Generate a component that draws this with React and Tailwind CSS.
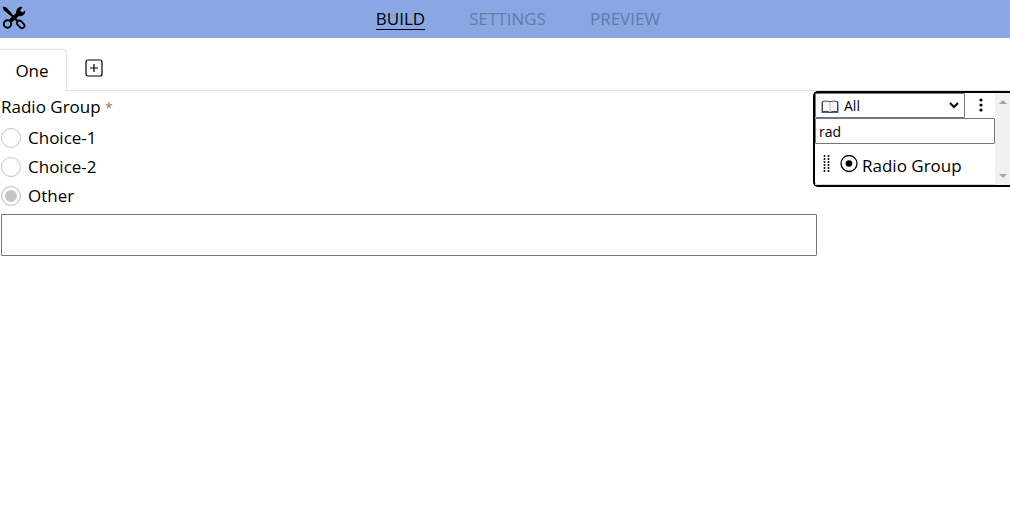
import React, { useState } from "react";

function ToolsIcon() {
  return (
    <svg width="24" height="24" viewBox="0 0 24 24" fill="none" stroke="#000" aria-hidden="true">
      <path d="M1.500 1.500L3.800 2L9 7.500L8 8.500L2.500 4Z" fill="#000" strokeWidth="1.400" strokeLinejoin="round" />
      <path d="M7.500 7L16.500 16" strokeWidth="2.200" />
      <rect x="14.500" y="15.800" width="8.500" height="5" rx="2.500" transform="rotate(45 18.700 18.300)" strokeWidth="1.800" />
      <path d="M8.500 15L16.500 7.500" strokeWidth="4" />
      <path d="M20.500 1a5 5 0 0 0-6 6.500L17 10a5 5 0 0 0 6.200-5.700L20.500 6.500L18 4.500Z" fill="#000" stroke="none" />
      <circle cx="5.500" cy="18" r="3.700" strokeWidth="1.900" />
    </svg>
  );
}

function BookIcon() {
  return (
    <svg width="18" height="14" viewBox="0 0 18 14" fill="none" aria-hidden="true">
      <path d="M0.500 2V13H17.500V2Z" fill="#2b6cab" />
      <path d="M1.500 1.500Q6 0.500 9 1.700Q12 0.500 16.500 1.500V11.700Q12 10.800 9 12.300Q6 10.800 1.500 11.700Z" fill="#f7f7f4" stroke="#333" strokeWidth="0.900" />
      <path d="M9 2V12" stroke="#aaa" strokeWidth="0.800" />
    </svg>
  );
}

function Choice({ label, checked, onChange }) {
  return (
    <label className="flex h-[29px] items-center gap-[7px]">
      <input
        type="radio"
        name="choice"
        checked={checked}
        onChange={onChange}
        className="size-5 shrink-0 appearance-none rounded-full border border-[#c0c5c5] bg-white checked:bg-[#c3c7c7] checked:shadow-[inset_0_0_0_3px_#fff]"
      />
      {label}
    </label>
  );
}

function Palette() {
  const [query, setQuery] = useState("rad");
  return (
    <aside className="absolute right-0 top-0 flex w-[197px] rounded-l-[5px] border-2 border-r-0 border-black bg-white">
      <div className="min-w-0 flex-1">
        <div className="flex h-[25px] items-center">
          <div className="relative h-[25px] w-[150px]">
            <select aria-label="Component category" className="block h-[25px] w-full appearance-none rounded-[1px] border border-[#767676] bg-white py-0 pl-7 text-sm leading-5">
              <option>All</option>
            </select>
            <span className="pointer-events-none absolute left-[6px] top-[7px]"><BookIcon /></span>
            <svg className="pointer-events-none absolute right-[6px] top-[9px]" width="10" height="7" viewBox="0 0 10 7" fill="none" aria-hidden="true">
              <path d="M1 1L5 5L9 1" stroke="#000" strokeWidth="2" />
            </svg>
          </div>
          <button type="button" aria-label="More options" className="flex flex-1 justify-center pb-[2px] pl-[2px]">
            <svg width="4" height="14" viewBox="0 0 4 14" aria-hidden="true">
              <circle cx="2" cy="2" r="1.600" />
              <circle cx="2" cy="7" r="1.600" />
              <circle cx="2" cy="12" r="1.600" />
            </svg>
          </button>
        </div>
        <input
          aria-label="Search components"
          value={query}
          onChange={(e) => setQuery(e.target.value)}
          className="block h-[26px] w-full rounded-[1px] border border-[#767676] px-[3px] text-sm outline-none"
        />
        <button type="button" className="flex h-[41px] w-full items-center border-b border-[#d8dcdc] pl-2">
          <svg width="7" height="18" viewBox="0 0 7 18" aria-hidden="true">
            {[1, 4, 7, 10, 13, 16].map((y) => (
              <g key={y}>
                <circle cx="1.500" cy={y} r="1" />
                <circle cx="5.500" cy={y} r="1" />
              </g>
            ))}
          </svg>
          <svg className="ml-[10px]" width="18" height="18" viewBox="0 0 18 18" fill="none" aria-hidden="true">
            <circle cx="9" cy="8.500" r="8" stroke="#000" strokeWidth="1.300" />
            <circle cx="9" cy="8.500" r="3.300" fill="#000" />
          </svg>
          <span className="ml-1 whitespace-nowrap pt-1">Radio Group</span>
        </button>
      </div>
      <div className="flex w-[15px] flex-col items-center justify-between bg-[#f1f1f1] py-[7px]" aria-hidden="true">
        <svg width="8" height="4" viewBox="0 0 8 4"><path d="M0 4L4 0L8 4Z" fill="#a5a5a5" /></svg>
        <svg width="8" height="4" viewBox="0 0 8 4"><path d="M0 0L4 4L8 0Z" fill="#a5a5a5" /></svg>
      </div>
    </aside>
  );
}

export default function App() {
  const [choice, setChoice] = useState("Other");
  return (
    <div className="font-['Open_Sans','Noto_Sans',sans-serif] text-[17px] text-black">
      <header className="flex h-[38px] items-center bg-[#89a8e3]">
        <div className="flex flex-1 pb-[2px] pl-[2px]"><ToolsIcon /></div>
        <nav className="flex gap-11 pl-6">
          <a href="#build" className="border-b border-black leading-5">BUILD</a>
          <a href="#settings" className="leading-5 text-[#627ba9]">SETTINGS</a>
          <a href="#preview" className="leading-5 text-[#627ba9]">PREVIEW</a>
        </nav>
        <div className="flex-1" />
      </header>
      <div className="flex pt-[11px]">
        <button type="button" className="h-[42px] w-[67px] rounded-tr border-r border-t border-[#dee2e6] pr-[2px]">One</button>
        <div className="flex flex-1 items-center border-b border-[#dee2e6] pb-[3px] pl-[18px]">
          <button type="button" aria-label="Add tab">
            <svg width="18" height="18" viewBox="0 0 18 18" fill="none" stroke="#000" aria-hidden="true">
              <rect x="1" y="1" width="16" height="16" rx="2" strokeWidth="1.200" />
              <path d="M9 5V13M5 9H13" strokeWidth="1.200" />
            </svg>
          </button>
        </div>
      </div>
      <div className="relative">
        <main className="w-[80.9%] pl-px pt-1">
          <fieldset>
            <legend className="h-7 leading-6">Radio Group <span className="text-sm text-[#a9784a]">*</span></legend>
            {["Choice-1", "Choice-2", "Other"].map((c) => (
              <Choice key={c} label={c} checked={choice === c} onChange={() => setChoice(c)} />
            ))}
          </fieldset>
          <input aria-label="Other value" className="mt-1 block h-[42px] w-full rounded-[1px] border border-[#767676] px-2" />
        </main>
        <Palette />
      </div>
    </div>
  );
}
